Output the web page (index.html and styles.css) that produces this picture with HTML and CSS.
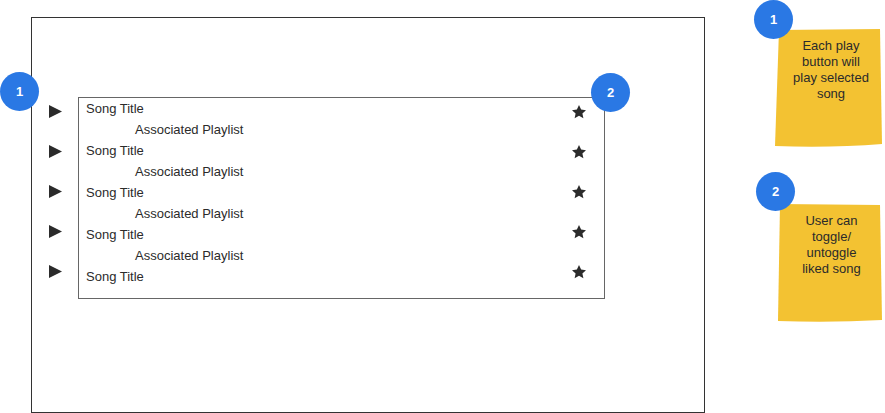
FILE: index.html
```html
<!DOCTYPE html>
<html>
<head>
<meta charset="utf-8">
<link rel="stylesheet" href="styles.css">
</head>
<body>
<div class="canvas">
  <div class="frame">
    <div class="plays">
      <svg class="play" viewBox="0 0 13 13"><polygon points="0,0 13,6.5 0,13"/></svg>
      <svg class="play" viewBox="0 0 13 13"><polygon points="0,0 13,6.5 0,13"/></svg>
      <svg class="play" viewBox="0 0 13 13"><polygon points="0,0 13,6.5 0,13"/></svg>
      <svg class="play" viewBox="0 0 13 13"><polygon points="0,0 13,6.5 0,13"/></svg>
      <svg class="play" viewBox="0 0 13 13"><polygon points="0,0 13,6.5 0,13"/></svg>
    </div>
    <div class="list">
      <div class="songs">
        <div class="title">Song Title</div>
        <div class="playlist">Associated Playlist</div>
        <div class="title">Song Title</div>
        <div class="playlist">Associated Playlist</div>
        <div class="title">Song Title</div>
        <div class="playlist">Associated Playlist</div>
        <div class="title">Song Title</div>
        <div class="playlist">Associated Playlist</div>
        <div class="title">Song Title</div>
      </div>
      <div class="stars">
        <svg class="star" viewBox="0 0 24 24"><path d="M12 1.5l3.2 6.9 7.3.8-5.4 5 1.5 7.3L12 17.8l-6.6 3.7 1.5-7.3-5.4-5 7.3-.8z"/></svg>
        <svg class="star" viewBox="0 0 24 24"><path d="M12 1.5l3.2 6.9 7.3.8-5.4 5 1.5 7.3L12 17.8l-6.6 3.7 1.5-7.3-5.4-5 7.3-.8z"/></svg>
        <svg class="star" viewBox="0 0 24 24"><path d="M12 1.5l3.2 6.9 7.3.8-5.4 5 1.5 7.3L12 17.8l-6.6 3.7 1.5-7.3-5.4-5 7.3-.8z"/></svg>
        <svg class="star" viewBox="0 0 24 24"><path d="M12 1.5l3.2 6.9 7.3.8-5.4 5 1.5 7.3L12 17.8l-6.6 3.7 1.5-7.3-5.4-5 7.3-.8z"/></svg>
        <svg class="star" viewBox="0 0 24 24"><path d="M12 1.5l3.2 6.9 7.3.8-5.4 5 1.5 7.3L12 17.8l-6.6 3.7 1.5-7.3-5.4-5 7.3-.8z"/></svg>
      </div>
    </div>
  </div>

  <div class="note note-one">
    <svg class="note-shape" viewBox="0 0 108 118" preserveAspectRatio="none"><path d="M4 1 L105 0 L107 115 Q56 119 0 117 Z"/></svg>
    <div class="note-text">Each play<br>button will<br>play selected<br>song</div>
  </div>
  <div class="note note-two">
    <svg class="note-shape" viewBox="0 0 105 118" preserveAspectRatio="none"><path d="M2 0 L102 1 L104 116 Q52 119 0 117 Z"/></svg>
    <div class="note-text">User can<br>toggle/<br>untoggle<br>liked song</div>
  </div>

  <div class="badge badge-a">1</div>
  <div class="badge badge-b">2</div>
  <div class="badge badge-c">1</div>
  <div class="badge badge-d">2</div>
</div>
</body>
</html>
```

FILE: styles.css
```css
html, body {
  margin: 0;
  padding: 0;
  background: #ffffff;
}
body {
  font-family: "Liberation Sans", Arial, sans-serif;
  color: #2b2b2b;
}
.canvas {
  position: relative;
  width: 885px;
  height: 413px;
  overflow: hidden;
}
.frame {
  position: absolute;
  left: 31px;
  top: 17px;
  width: 674px;
  height: 396px;
  box-sizing: border-box;
  border: 1px solid #333333;
  padding: 79px 0 0 17px;
  display: flex;
  align-items: flex-start;
}
.plays {
  width: 29px;
  padding-top: 8px;
  display: flex;
  flex-direction: column;
  gap: 27px;
}
.play {
  width: 13px;
  height: 13px;
  display: block;
  fill: #2b2b2b;
}
.list {
  width: 527px;
  height: 202px;
  box-sizing: border-box;
  border: 1px solid #666666;
  display: flex;
  justify-content: space-between;
  align-items: flex-start;
  padding: 0 17px 0 7px;
}
.songs {
  font-size: 13px;
  line-height: 21px;
}
.playlist {
  padding-left: 49px;
}
.stars {
  padding-top: 6px;
  display: flex;
  flex-direction: column;
  gap: 24px;
}
.star {
  width: 16px;
  height: 16px;
  display: block;
  fill: #2b2b2b;
}
.note {
  position: absolute;
  display: flex;
  justify-content: center;
}
.note-one {
  left: 775px;
  top: 29px;
  width: 108px;
  height: 118px;
}
.note-two {
  left: 778px;
  top: 204px;
  width: 105px;
  height: 118px;
}
.note-shape {
  position: absolute;
  left: 0;
  top: 0;
  width: 100%;
  height: 100%;
  fill: #f3c232;
}
.note-text {
  position: relative;
  font-size: 13px;
  line-height: 16px;
  text-align: center;
  color: #2b2b2b;
  padding-top: 9px;
  padding-left: 4px;
}
.note-two .note-text {
  padding-left: 2px;
}
.badge {
  position: absolute;
  width: 39px;
  height: 39px;
  border-radius: 50%;
  background: #2a78e4;
  color: #ffffff;
  font-size: 13px;
  font-weight: bold;
  display: flex;
  align-items: center;
  justify-content: center;
}
.badge-a { left: 0; top: 72px; }
.badge-b { left: 591px; top: 73px; }
.badge-c { left: 754px; top: 0; }
.badge-d { left: 756px; top: 172px; }
```
